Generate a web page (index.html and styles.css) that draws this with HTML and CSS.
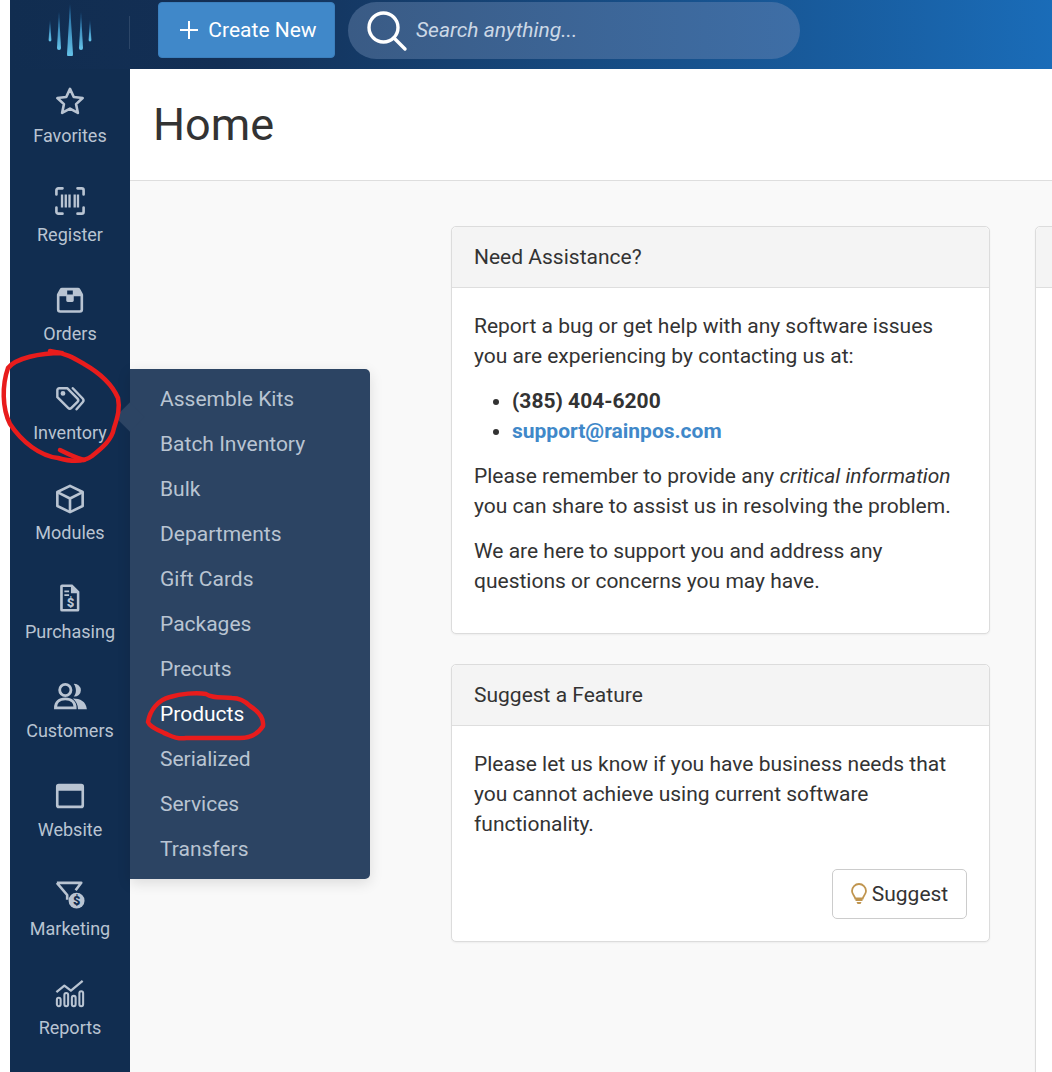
FILE: index.html
```html
<!DOCTYPE html>
<html lang="en">
<head>
<meta charset="utf-8">
<title>Home</title>
<link rel="stylesheet" href="styles.css">
</head>
<body>
<div class="app">
  <header class="topbar">
    <div class="brand">
      <svg class="logo" width="44" height="52" viewBox="0 0 44 52">
        <defs><linearGradient id="drop" x1="0" y1="0" x2="0" y2="1"><stop offset="0" stop-color="#1c5f96"/><stop offset="1" stop-color="#66c4ea"/></linearGradient></defs>
        <path fill="url(#drop)" d="M2 16 L3.4 36 a1.4 1.4 0 0 1 -2.8 0Z"/>
        <path fill="url(#drop)" d="M11 8 L13 44 a2 2 0 0 1 -4 0Z"/>
        <path fill="url(#drop)" d="M22 0 L25 50 a3 3 0 0 1 -6 0Z"/>
        <path fill="url(#drop)" d="M33 8 L35 44 a2 2 0 0 1 -4 0Z"/>
        <path fill="url(#drop)" d="M42 16 L43.4 36 a1.4 1.4 0 0 1 -2.8 0Z"/>
      </svg>
    </div>
    <button class="create"><svg width="18" height="18" viewBox="0 0 18 18"><path d="M9 0v18M0 9h18" stroke="#fff" stroke-width="2"/></svg>Create New</button>
    <div class="search">
      <svg width="42" height="42" viewBox="0 0 42 42" fill="none" stroke="#fff" stroke-width="3.4"><circle cx="17.5" cy="17.5" r="14.5"/><path d="M28 28l11 11" stroke-linecap="round"/></svg>
      <span>Search anything...</span>
    </div>
  </header>
  <div class="body">
    <nav class="sidebar">
      <a class="nav-item"><svg class="nav-icon" viewBox="0 0 32 32" fill="none" stroke="currentColor" stroke-width="2.800" stroke-linejoin="round"><path d="M16 2l4 8.600 9.500 1.200-7 6.500 1.900 9.400-8.400-4.700-8.400 4.700 1.900-9.400-7-6.500 9.500-1.200z"/></svg>Favorites</a>
      <a class="nav-item"><svg class="nav-icon" viewBox="0 0 32 32" fill="none" stroke="currentColor" stroke-width="2.800" stroke-linecap="round"><path d="M1.500 9V4.500A2 2 0 0 1 3.500 2.500H8M24 2.500h4.500a2 2 0 0 1 2 2V9M30.500 23v4.500a2 2 0 0 1-2 2H24M8 29.500H3.500a2 2 0 0 1-2-2V23"/><path d="M7.500 9v14M11.500 9v14M15.500 9v14M21 9v14M24.500 9v14" stroke-linecap="butt" stroke-width="2.500"/></svg>Register</a>
      <a class="nav-item"><svg class="nav-icon" viewBox="0 0 32 32"><path fill="currentColor" fill-rule="evenodd" d="M8 3h16a3 3 0 0 1 3 1.500L29.500 9a3 3 0 0 1 .5 1.500V26a3.500 3.500 0 0 1-3.500 3.500h-21A3.500 3.500 0 0 1 2 26V10.500a3 3 0 0 1 .5-1.500L5 4.500A3 3 0 0 1 8 3zM4.800 12v14a.8.8 0 0 0 .8.8h20.800a.8.8 0 0 0 .8-.8V12H20v4.500a1.500 1.500 0 0 1-1.500 1.500h-5a1.500 1.500 0 0 1-1.500-1.500V12zM13 5.800V10h6V5.800z"/></svg>Orders</a>
      <a class="nav-item"><svg class="nav-icon" viewBox="0 0 32 32" fill="none" stroke="currentColor" stroke-width="2.600" stroke-linejoin="round"><path d="M2.500 6.500a2 2 0 0 1 2-2h8.500l11 11a2.500 2.500 0 0 1 0 3.500l-6.500 6.500a2.500 2.500 0 0 1-3.500 0l-11.500-11.500z"/><path d="M19 4.500l10.500 11a3 3 0 0 1 0 4L23 27" stroke-linecap="round"/><circle cx="8.500" cy="10" r="1.300" fill="currentColor"/></svg>Inventory</a>
      <a class="nav-item"><svg class="nav-icon" viewBox="0 0 32 32" fill="none" stroke="currentColor" stroke-width="2.800" stroke-linejoin="round"><path d="M16 2L29.500 8.500v15L16 30 2.500 23.500v-15z"/><path d="M3 9l13 6.500L29 9M16 15.500V29.500"/></svg>Modules</a>
      <a class="nav-item"><svg class="nav-icon" viewBox="0 0 32 32"><path fill="currentColor" fill-rule="evenodd" d="M7.500 1.500h11L26 9v19.500a2 2 0 0 1-2 2H7.500a2 2 0 0 1-2-2v-25a2 2 0 0 1 2-2zM8.300 4.300v23.400h15V10.800H17V4.300z"/><path fill="currentColor" d="M10 8h5v1.800h-5zM10 12h5v1.800h-5z"/><text x="16.500" y="25.500" font-size="14" font-weight="900" text-anchor="middle" fill="currentColor" font-family="Roboto">$</text></svg>Purchasing</a>
      <a class="nav-item"><svg class="nav-icon nav-icon-wide" viewBox="0 0 36 32"><path fill="none" stroke="currentColor" stroke-width="3" d="M13 2.500a6 6 0 1 1 0 12 6 6 0 0 1 0-12zM2.500 27.500c0-6 4-9.500 10.500-9.500s10.500 3.500 10.500 9.500z"/><path fill="currentColor" d="M22 2a6.800 6.800 0 1 1 0 13.500c1.500-1.700 2.300-4 2.300-6.500S23.500 3.700 22 2zM21 17.500c8 0 14 3 15 11.500H26.500c0-4.800-2-8.500-5.500-11.500z"/></svg>Customers</a>
      <a class="nav-item"><svg class="nav-icon" viewBox="0 0 32 32"><path fill="currentColor" fill-rule="evenodd" d="M4 3h24a3 3 0 0 1 3 3v20a3 3 0 0 1-3 3H4a3 3 0 0 1-3-3V6a3 3 0 0 1 3-3zM3.800 10.500v15.200a.5.5 0 0 0 .5.5h23.400a.5.5 0 0 0 .5-.5V10.500z"/></svg>Website</a>
      <a class="nav-item"><svg class="nav-icon" viewBox="0 0 32 32"><path fill="none" stroke="currentColor" stroke-width="2.800" stroke-linejoin="round" d="M2 3h26l-6 8M2 3l11 13v5"/><circle cx="23" cy="22" r="8.500" fill="currentColor"/><text x="23" y="27" font-size="13.500" font-weight="900" text-anchor="middle" fill="#112d50" font-family="Roboto">$</text></svg>Marketing</a>
      <a class="nav-item"><svg class="nav-icon" viewBox="0 0 32 32" fill="none" stroke="currentColor" stroke-linejoin="round"><path stroke-width="2.400" d="M1.500 14l8.500-7 7 5.500L29.500 2"/><rect x="2" y="20" width="4" height="9" rx="2" stroke-width="2.200"/><rect x="10" y="15" width="4" height="14" rx="2" stroke-width="2.200"/><rect x="18" y="18" width="4" height="11" rx="2" stroke-width="2.200"/><rect x="26" y="13" width="4" height="16" rx="2" stroke-width="2.200"/></svg>Reports</a>
    </nav>
    <main class="main">
      <div class="page-head"><h1>Home</h1></div>
      <div class="content">
        <div class="column">
          <section class="card">
            <h2 class="card-head">Need Assistance?</h2>
            <div class="card-body">
              <p>Report a bug or get help with any software issues you are experiencing by contacting us at:</p>
              <ul>
                <li><strong>(385) 404-6200</strong></li>
                <li><a class="mail">support@rainpos.com</a></li>
              </ul>
              <p>Please remember to provide any <em>critical information</em> you can share to assist us in resolving the problem.</p>
              <p>We are here to support you and address any questions or concerns you may have.</p>
            </div>
          </section>
          <section class="card">
            <h2 class="card-head">Suggest a Feature</h2>
            <div class="card-body">
              <p>Please let us know if you have business needs that you cannot achieve using current software functionality.</p>
              <div class="actions">
                <button class="suggest"><svg width="16" height="22" viewBox="0 0 16 22"><path fill="none" stroke="#c0954f" stroke-width="1.800" d="M8 1a7 7 0 0 1 7 7c0 3-2.500 4.500-3.300 7.500H4.300C3.500 12.500 1 11 1 8a7 7 0 0 1 7-7z"/><path fill="#c0954f" d="M4.500 16h7v2h-7zM5.500 19h5l-1 2h-3z"/></svg>Suggest</button>
              </div>
            </div>
          </section>
        </div>
        <section class="card card-side"><div class="card-head card-head-empty"></div></section>
      </div>
    </main>
  </div>
  <div class="flyout">
    <a>Assemble Kits</a>
    <a>Batch Inventory</a>
    <a>Bulk</a>
    <a>Departments</a>
    <a>Gift Cards</a>
    <a>Packages</a>
    <a>Precuts</a>
    <a class="active">Products</a>
    <a>Serialized</a>
    <a>Services</a>
    <a>Transfers</a>
  </div>
  <svg class="marks" width="1052" height="1072" viewBox="0 0 1052 1072" fill="none" stroke="#e81c1c" stroke-width="4.500" stroke-linecap="round" stroke-linejoin="round">
    <path d="M62 353C40 353 16 358 8 368C2 385 2 408 10 424C22 442 40 456 58 458C72 462 84 462 92 456C102 448 112 440 114 428C118 416 120 408 118 398C112 384 98 372 84 364C74 358 66 353 50 351"/>
    <path d="M60 450C68 454 76 458 84 460"/>
    <path d="M170 697C180 694 196 692 206 694C212 698 218 697 232 698C240 698 246 702 250 706C258 711 264 718 263 726C258 734 250 738 240 738L186 738C176 740 170 735 164 733C156 729 150 727 148 722C150 710 158 700 170 697Z"/>
  </svg>
</div>
</body>
</html>
```
FILE: styles.css
```css
* { box-sizing: border-box; }
html, body { margin: 0; height: 100%; }
body { font-family: Roboto, "Liberation Sans", sans-serif; color: #333; background: #fff; overflow: hidden; }
.app { position: relative; width: 1052px; height: 1072px; padding-left: 10px; overflow: hidden; display: flex; flex-direction: column; }
.topbar { flex: 0 0 69px; display: flex; align-items: flex-start; background: linear-gradient(90deg, #112d50 0%, #132f55 20%, #1a6cb8 100%); }
.brand { width: 120px; height: 69px; display: flex; justify-content: center; align-items: flex-start; padding-top: 4px; position: relative; }
.brand::after { content: ""; position: absolute; right: 0; top: 16px; height: 33px; width: 1px; background: #2c4668; }
.create { margin: 2px 0 0 28px; width: 177px; height: 56px; padding: 0 0 0 4px; display: flex; align-items: center; justify-content: center; gap: 10px; background: #4088c9; color: #fff; border: 1px solid #3b7fbd; border-radius: 4px; font: 400 21px Roboto, sans-serif; }
.search { margin: 2px 0 0 13px; width: 452px; height: 57px; border-radius: 29px; display: flex; align-items: center; gap: 8px; padding-left: 18px; background: linear-gradient(90deg, #3a5b85 0%, #3e6ea6 100%); color: #ccd8e6; font-style: italic; font-size: 21px; line-height: 54px; }
.search span { margin-bottom: 2px; }
.body { flex: 1; display: flex; min-height: 0; }
.sidebar { width: 120px; background: #112d50; display: flex; flex-direction: column; flex: none; }
.nav-item { height: 99.15px; flex: none; display: flex; flex-direction: column; align-items: center; padding-top: 18px; color: #b9c4d2; font-size: 18px; line-height: 24px; }
.nav-icon { width: 30px; height: 30px; margin-bottom: 7px; }
.nav-icon-wide { width: 36px; }
.main { flex: 1; min-width: 0; background: #f9f9f9; display: flex; flex-direction: column; }
.page-head { height: 112px; background: #fff; border-bottom: 1px solid #dedede; padding: 25px 0 0 23px; }
h1 { margin: 0; font-size: 45px; line-height: 62px; font-weight: 400; color: #333; }
.content { flex: 1; min-height: 0; display: flex; gap: 45px; padding: 45px 0 0 321px; }
.column { width: 539px; flex: none; display: flex; flex-direction: column; gap: 30px; }
.card { background: #fff; border: 1px solid #dcdcdc; border-radius: 5px; box-shadow: 0 1px 2px rgba(0,0,0,.05); font-size: 21px; line-height: 30px; }
.card-side { flex: 1; min-width: 400px; margin-bottom: -20px; }
.card-head { margin: 0; height: 61px; background: #f4f4f4; border-bottom: 1px solid #dedede; border-radius: 5px 5px 0 0; padding: 15px 22px 0; font-size: 21px; line-height: 30px; font-weight: 400; }
.card-head-empty { padding: 0; }
.card-body { padding: 23px 22px 22px; }
.card-body p { margin: 0 0 15px; }
.card-body ul { margin: 0 0 15px; padding-left: 38px; }
strong { font-weight: 700; }
.mail { color: #4088c9; font-weight: 700; }
.actions { display: flex; justify-content: flex-end; padding-top: 15px; }
.suggest { width: 135px; height: 50px; display: flex; align-items: center; justify-content: center; gap: 5px; background: #fff; border: 1px solid #ccc; border-radius: 5px; color: #333; font: 400 21px Roboto, sans-serif; }
.flyout { position: absolute; left: 130px; top: 369px; width: 240px; height: 510px; padding: 8px 30px 0; background: #2c4463; border-radius: 0 5px 5px 0; box-shadow: 0 4px 14px rgba(0,0,0,.12); display: flex; flex-direction: column; }
.flyout::before { content: ""; position: absolute; left: -15px; top: 33px; width: 30px; height: 30px; background: #2c4463; transform: rotate(45deg) scale(.7); z-index: 0; }
.flyout a { position: relative; height: 45px; line-height: 45px; font-size: 21px; color: #b9c4d2; flex: none; }
.flyout a.active { color: #fff; }
.marks { position: absolute; left: 0; top: 0; pointer-events: none; }
```
